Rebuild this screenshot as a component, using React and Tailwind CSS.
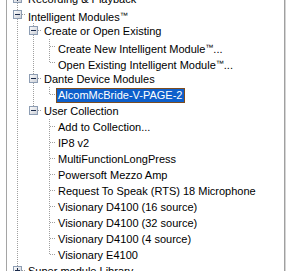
const LINE = '#a0a0a0';

// guides: one bool per ancestor column (true = continuing vertical line)
const rows = [
  { label: 'Recording & Playback', guides: [], kind: 'closed', last: false },
  { label: 'Intelligent Modules', tm: true, guides: [], kind: 'open', last: false },
  { label: 'Create or Open Existing', guides: [true], kind: 'open', last: false },
  { label: 'Create New Intelligent Module', tm: true, tail: '...', guides: [true, true], kind: 'leaf', last: false },
  { label: 'Open Existing Intelligent Module', tm: true, tail: '...', guides: [true, true], kind: 'leaf', last: true },
  { label: 'Dante Device Modules', guides: [true], kind: 'open', last: false },
  { label: 'AlcomMcBride-V-PAGE-2', guides: [true, true], kind: 'leaf', last: true, selected: true },
  { label: 'User Collection', guides: [true], kind: 'open', last: true },
  { label: 'Add to Collection...', guides: [true, false], kind: 'leaf', last: false },
  { label: 'IP8 v2', guides: [true, false], kind: 'leaf', last: false },
  { label: 'MultiFunctionLongPress', guides: [true, false], kind: 'leaf', last: false },
  { label: 'Powersoft Mezzo Amp', guides: [true, false], kind: 'leaf', last: false },
  { label: 'Request To Speak (RTS) 18 Microphone', guides: [true, false], kind: 'leaf', last: false },
  { label: 'Visionary D4100 (16 source)', guides: [true, false], kind: 'leaf', last: false },
  { label: 'Visionary D4100 (32 source)', guides: [true, false], kind: 'leaf', last: false },
  { label: 'Visionary D4100 (4 source)', guides: [true, false], kind: 'leaf', last: false },
  { label: 'Visionary E4100', guides: [true, false], kind: 'leaf', last: true },
  { label: 'Super module Library', guides: [], kind: 'closed', last: false },
];

function Guide({ on }) {
  return (
    <svg width="16" height="16" className="shrink-0" shapeRendering="crispEdges">
      {on && <line x1="7.5" y1="0" x2="7.5" y2="16" stroke={LINE} strokeDasharray="1 1" />}
    </svg>
  );
}

function Connector({ kind, last }) {
  const w = kind === 'leaf' ? 14 : 16;
  return (
    <svg width={w} height="16" className="shrink-0" shapeRendering="crispEdges">
      <defs>
        <linearGradient id="bx" x1="0" y1="0" x2="1" y2="1">
          <stop offset="0" stopColor="#ffffff" />
          <stop offset="1" stopColor="#c8ccd4" />
        </linearGradient>
      </defs>
      <line x1="7.5" y1="0" x2="7.5" y2="8" stroke={LINE} strokeDasharray="1 1" />
      {!last && <line x1="7.5" y1="8" x2="7.5" y2="16" stroke={LINE} strokeDasharray="1 1" />}
      {kind === 'leaf' ? (
        <line x1="8" y1="7.5" x2={w} y2="7.5" stroke={LINE} strokeDasharray="1 1" />
      ) : (
        <>
          <line x1="12" y1="7.5" x2={w} y2="7.5" stroke={LINE} strokeDasharray="1 1" />
          <rect x="3.5" y="3.5" width="8" height="8" fill="url(#bx)" stroke="#8d9db3" />
          <line x1="5" y1="7.5" x2="10" y2="7.5" stroke="#1a2a4a" />
          {kind === 'closed' && <line x1="7.5" y1="5" x2="7.5" y2="10" stroke="#1a2a4a" />}
        </>
      )}
    </svg>
  );
}

export default function App() {
  return (
    <div
      className="w-[287px] h-[271px] overflow-hidden bg-white flex"
      style={{ fontFamily: '"Liberation Sans", Arial, sans-serif' }}
    >
      <div className="w-[6px] shrink-0 bg-white" />
      <div className="flex-1 border-l border-[#a5a5a5] pl-[3px] overflow-hidden">
        <div className="-mt-[9px] flex flex-col">
          {rows.map((r, i) => (
            <div key={i} className="flex h-[16px] shrink-0">
              {r.guides.map((g, j) => (
                <Guide key={j} on={g} />
              ))}
              <Connector kind={r.kind} last={r.last} />
              <span
                className={
                  'mt-[1px] h-[15px] px-[1px] border text-[11px] leading-[13px] whitespace-nowrap ' +
                  (r.selected
                    ? 'bg-[#0d5fcb] border-[#7e4d1f] text-white'
                    : 'border-transparent text-black')
                }
              >
                {r.label}
                {r.tm && <span className="text-[8px] align-[3px]">™</span>}
                {r.tail}
              </span>
            </div>
          ))}
        </div>
      </div>
      <div className="w-[2px] shrink-0 border-l border-[#a0a0a0] bg-[#d4d4d4]" />
      <div className="w-[1px] shrink-0 bg-white" />
    </div>
  );
}
